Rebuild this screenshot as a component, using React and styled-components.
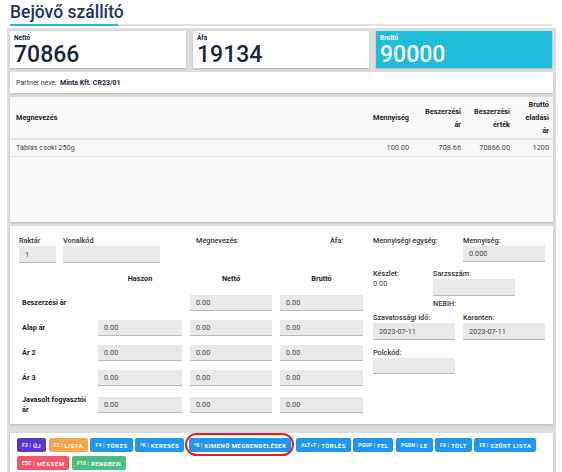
import React from "react";
import styled, { createGlobalStyle } from "styled-components";

const GlobalStyle = createGlobalStyle`
  html, body { margin: 0; padding: 0; background: #fff; }
  body { font-family: Roboto, "Liberation Sans", sans-serif; color: #333; }
  * { box-sizing: border-box; }
`;

const Page = styled.div`
  width: 562px;
  height: 472px;
  overflow: hidden;
`;

const Header = styled.div`
  padding: 0 10px 0 10px;
  height: 28px;
`;

const Title = styled.h1`
  margin: 0;
  padding-top: 1px;
  font-size: 17.5px;
  font-weight: 500;
  color: #223459;
  line-height: 22px;
`;

const Rule = styled.div`
  margin-top: 1px;
  height: 2px;
  width: 542px;
  background: linear-gradient(to right, #1fbcd8 0, #1fbcd8 108px, #e2e2e2 108px);
`;

const Board = styled.div`
  margin-left: 7px;
  width: 549px;
  background: #dedede;
  padding: 3px 3px 0 3px;
  display: flex;
  flex-direction: column;
  gap: 4px;
`;

const Card = styled.div`
  background: ${(p) => p.$bg || "#fff"};
  box-shadow: 0 1px 2px rgba(0, 0, 0, 0.18);
`;

const Totals = styled.div`
  display: grid;
  grid-template-columns: 176px 176px 176px;
  gap: 7px;
  height: 37px;
`;

const TotalCard = styled(Card)`
  padding: 3px 4px 0 4px;
  color: ${(p) => (p.$accent ? "#fff" : "#1c2440")};
`;

const TotalLabel = styled.div`
  font-size: 6.5px;
  font-weight: 700;
  line-height: 9px;
  height: 9px;
`;

const TotalValue = styled.div`
  font-size: 23px;
  font-weight: 500;
  line-height: 23px;
`;

const Partner = styled(Card)`
  height: 21px;
  padding: 0 6px;
  display: flex;
  align-items: center;
  font-size: 7px;
  color: #333;
  b { color: #1c2440; margin-left: 3px; }
`;

const TableCard = styled(Card)`
  height: 125px;
  background: #fafafa;
`;

const Table = styled.table`
  width: 100%;
  border-collapse: collapse;
  font-size: 7.3px;
  th {
    font-weight: 700;
    color: #222;
    text-align: right;
    line-height: 13px;
    padding: 1px 4px 1px 4px;
    height: 40px;
    border-bottom: 2px solid #e6e6e6;
  }
  th:first-child, td:first-child { text-align: left; padding-left: 6px; }
  td {
    text-align: right;
    color: #444;
    padding: 0 4px;
    height: 17px;
    border-bottom: 1px solid #e6e6e6;
  }
`;

const FormCard = styled(Card)`
  height: 198px;
  padding: 10px 0 0 0;
  display: flex;
  font-size: 7.3px;
`;

const LeftPane = styled.div`
  width: 360px;
`;

const RightPane = styled.div`
  padding-left: 3px;
  display: flex;
  flex-direction: column;
`;

const TopRow = styled.div`
  display: flex;
  padding-left: 9px;
`;

const Field = styled.div`
  width: ${(p) => p.$w}px;
  margin-right: ${(p) => p.$mr || 0}px;
  display: flex;
  flex-direction: column;
`;

const Label = styled.div`
  color: #333;
  font-weight: 500;
  line-height: 10px;
  height: 10px;
  white-space: nowrap;
`;

const Input = styled.div`
  height: ${(p) => p.$h || 17}px;
  background: #e9e9e9;
  border-bottom: 1px solid #b9b9b9;
  color: #444;
  display: flex;
  align-items: center;
  padding-left: 6px;
  margin-top: ${(p) => p.$mt || 0}px;
`;

const PriceGrid = styled.div`
  display: grid;
  grid-template-columns: 68px 84px 82px 83px;
  column-gap: 8px;
  row-gap: 9px;
  margin-top: 11px;
  padding-left: 12px;
  align-items: center;
`;

const ColHead = styled.div`
  text-align: center;
  font-weight: 700;
  color: #222;
  height: 12px;
`;

const RowLabel = styled.div`
  font-weight: 700;
  color: #222;
  line-height: 10px;
`;

const RightRow = styled.div`
  display: flex;
  margin-top: ${(p) => p.$mt || 0}px;
`;

const Plain = styled.div`
  color: #444;
  line-height: 10px;
`;

const FooterBar = styled(Card)`
  margin-top: 5px;
  height: 45px;
  padding: 5px 7px;
  display: flex;
  flex-wrap: wrap;
  align-content: flex-start;
  gap: 4px 2.5px;
`;

const colors = {
  purple: "#5b34d3",
  orange: "#f8a54b",
  blue: "#2196f0",
  red: "#f1566a",
  green: "#4dbe80",
};

const KeyButton = styled.div`
  height: 14px;
  padding: 0 5px;
  border-radius: 2px;
  background: ${(p) => colors[p.$color]};
  color: #fff;
  font-size: 6px;
  font-weight: 700;
  letter-spacing: 0.45px;
  display: flex;
  align-items: center;
  white-space: nowrap;
  small { font-size: 5px; letter-spacing: 0.2px; margin-right: 2px; }
`;

const Marked = styled.div`
  position: relative;
  margin: 0 2px;
  &::after {
    content: "";
    position: absolute;
    left: -4px;
    right: -3px;
    top: -5px;
    bottom: -4px;
    border: 2px solid #dc1f2a;
    border-radius: 12px;
  }
`;

const Key = ({ k, label, color }) => (
  <KeyButton $color={color}>
    <small>{k} |</small>
    {label}
  </KeyButton>
);

const prices = [
  ["Beszerzési ár", false],
  ["Alap ár", true],
  ["Ár 2", true],
  ["Ár 3", true],
  ["Javasolt fogyasztói ár", true],
];

export default function App() {
  return (
    <Page>
      <GlobalStyle />
      <Header>
        <Title>Bejövő szállító</Title>
        <Rule />
      </Header>
      <Board>
        <Totals>
          <TotalCard>
            <TotalLabel>Nettó</TotalLabel>
            <TotalValue>70866</TotalValue>
          </TotalCard>
          <TotalCard>
            <TotalLabel>Áfa</TotalLabel>
            <TotalValue>19134</TotalValue>
          </TotalCard>
          <TotalCard $bg="#1ebcd8" $accent>
            <TotalLabel>Bruttó</TotalLabel>
            <TotalValue>90000</TotalValue>
          </TotalCard>
        </Totals>
        <Partner>
          Partner neve: <b>Minta Kft. CR23/01</b>
        </Partner>
        <TableCard>
          <Table>
            <thead>
              <tr>
                <th>Megnevezés</th>
                <th style={{ width: 56 }}>Mennyiség</th>
                <th style={{ width: 52 }}>Beszerzési<br />ár</th>
                <th style={{ width: 49 }}>Beszerzési<br />érték</th>
                <th style={{ width: 39 }}>Bruttó<br />eladási<br />ár</th>
              </tr>
            </thead>
            <tbody>
              <tr>
                <td>Táblás csoki 250g</td>
                <td>100.00</td>
                <td>708.66</td>
                <td>70866.00</td>
                <td>1200</td>
              </tr>
            </tbody>
          </Table>
        </TableCard>
        <FormCard>
          <LeftPane>
            <TopRow>
              <Field $w={37} $mr={7}>
                <Label>Raktár</Label>
                <Input>1</Input>
              </Field>
              <Field $w={97} $mr={36}>
                <Label>Vonalkód</Label>
                <Input />
              </Field>
              <Field $w={134}>
                <Label>Megnevezés:</Label>
              </Field>
              <Field $w={30}>
                <Label>Áfa:</Label>
              </Field>
            </TopRow>
            <PriceGrid>
              <div />
              <ColHead>Haszon</ColHead>
              <ColHead>Nettó</ColHead>
              <ColHead>Bruttó</ColHead>
              {prices.map(([name, hasMargin]) => (
                <React.Fragment key={name}>
                  <RowLabel>{name}</RowLabel>
                  {hasMargin ? <Input $h={16}>0.00</Input> : <div />}
                  <Input $h={16}>0.00</Input>
                  <Input $h={16}>0.00</Input>
                </React.Fragment>
              ))}
            </PriceGrid>
          </LeftPane>
          <RightPane>
            <RightRow>
              <Field $w={82} $mr={8}>
                <Label>Mennyiségi egység:</Label>
              </Field>
              <Field $w={82}>
                <Label>Mennyiség:</Label>
                <Input $h={16}>0.000</Input>
              </Field>
            </RightRow>
            <RightRow $mt={7}>
              <Field $w={52} $mr={8}>
                <Label>Készlet:</Label>
                <Plain>0.00</Plain>
              </Field>
              <Field $w={82}>
                <Label>Sarzsszám:</Label>
                <Input $h={17} />
                <Label style={{ marginTop: 3 }}>NEBIH:</Label>
              </Field>
            </RightRow>
            <RightRow $mt={4}>
              <Field $w={82} $mr={8}>
                <Label>Szavatossági idő:</Label>
                <Input $h={17}>2023-07-11</Input>
              </Field>
              <Field $w={82}>
                <Label>Karanten:</Label>
                <Input $h={17}>2023-07-11</Input>
              </Field>
            </RightRow>
            <RightRow $mt={8}>
              <Field $w={82}>
                <Label>Polckód:</Label>
                <Input $h={16} />
              </Field>
            </RightRow>
          </RightPane>
        </FormCard>
        <FooterBar>
          <Key k="F2" label="ÚJ" color="purple" />
          <Key k="F3" label="LISTA" color="orange" />
          <Key k="F4" label="TÖRZS" color="blue" />
          <Key k="*K" label="KERESÉS" color="blue" />
          <Marked>
            <Key k="*R" label="KIMENŐ MEGRENDELÉSEK" color="blue" />
          </Marked>
          <Key k="ALT+T" label="TÖRLÉS" color="blue" />
          <Key k="PGUP" label="FEL" color="blue" />
          <Key k="PGDN" label="LE" color="blue" />
          <Key k="F6" label="TÖLT" color="blue" />
          <Key k="F8" label="SZŰRT LISTA" color="blue" />
          <Key k="ESC" label="MÉGSEM" color="red" />
          <Key k="F10" label="RENDBEN" color="green" />
        </FooterBar>
      </Board>
    </Page>
  );
}
